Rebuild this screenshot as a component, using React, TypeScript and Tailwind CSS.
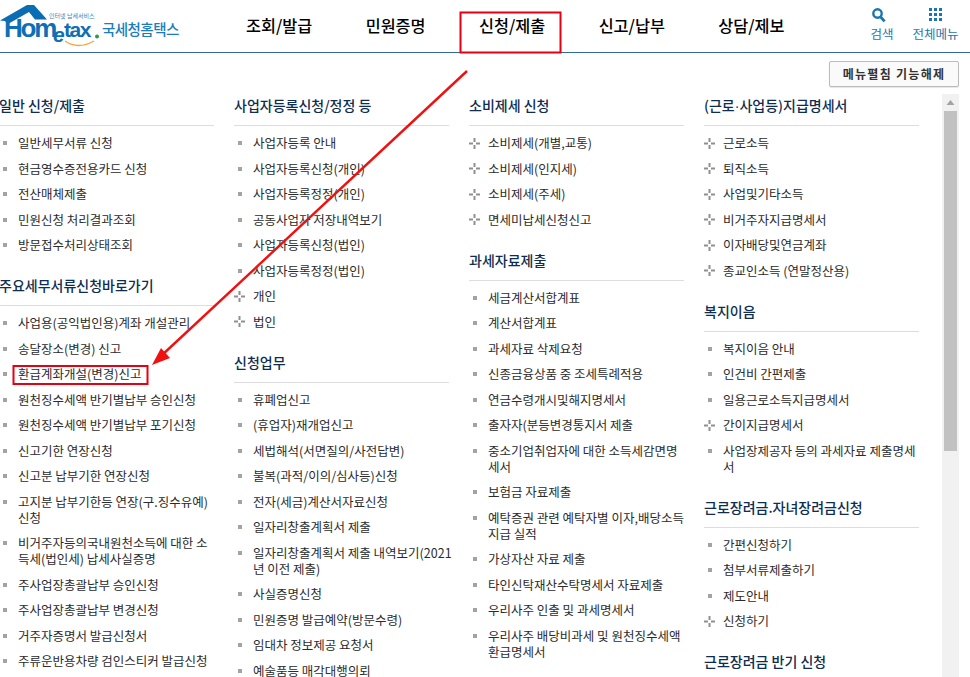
import type { ReactNode } from 'react';

type Item = { t: string; plus?: boolean };
type Section = { title: ReactNode; items: Item[] };

const s = (...list: string[]): Item[] => list.map((t) => ({ t }));
const p = (...list: string[]): Item[] => list.map((t) => ({ t, plus: true }));

const columns: Section[][] = [
  [
    {
      title: '일반 신청/제출',
      items: s('일반세무서류 신청', '현금영수증전용카드 신청', '전산매체제출', '민원신청 처리결과조회', '방문접수처리상태조회'),
    },
    {
      title: '주요세무서류신청바로가기',
      items: s(
        '사업용(공익법인용)계좌 개설관리',
        '송달장소(변경) 신고',
        '환급계좌개설(변경)신고',
        '원천징수세액 반기별납부 승인신청',
        '원천징수세액 반기별납부 포기신청',
        '신고기한 연장신청',
        '신고분 납부기한 연장신청',
        '고지분 납부기한등 연장(구.징수유예)\n신청',
        '비거주자등의국내원천소득에 대한 소\n득세(법인세) 납세사실증명',
        '주사업장총괄납부 승인신청',
        '주사업장총괄납부 변경신청',
        '거주자증명서 발급신청서',
        '주류운반용차량 검인스티커 발급신청',
      ),
    },
  ],
  [
    {
      title: '사업자등록신청/정정 등',
      items: [
        ...s('사업자등록 안내', '사업자등록신청(개인)', '사업자등록정정(개인)', '공동사업자 저장내역보기', '사업자등록신청(법인)', '사업자등록정정(법인)'),
        ...p('개인', '법인'),
      ],
    },
    {
      title: '신청업무',
      items: s(
        '휴폐업신고',
        '(휴업자)재개업신고',
        '세법해석(서면질의/사전답변)',
        '불복(과적/이의/심사등)신청',
        '전자(세금)계산서자료신청',
        '일자리창출계획서 제출',
        '일자리창출계획서 제출 내역보기(2021\n년 이전 제출)',
        '사실증명신청',
        '민원증명 발급예약(방문수령)',
        '임대차 정보제공 요청서',
        '예술품등 매각대행의뢰',
      ),
    },
  ],
  [
    {
      title: '소비제세 신청',
      items: p('소비제세(개별,교통)', '소비제세(인지세)', '소비제세(주세)', '면세미납세신청신고'),
    },
    {
      title: '과세자료제출',
      items: s(
        '세금계산서합계표',
        '계산서합계표',
        '과세자료 삭제요청',
        '신종금융상품 중 조세특례적용',
        '연금수령개시및해지명세서',
        '출자자(분등변경통지서 제출',
        '중소기업취업자에 대한 소득세감면명\n세서',
        '보험금 자료제출',
        '예탁증권 관련 예탁자별 이자,배당소득\n지급 실적',
        '가상자산 자료 제출',
        '타인신탁재산수탁명세서 자료제출',
        '우리사주 인출 및 과세명세서',
        '우리사주 배당비과세 및 원천징수세액\n환급명세서',
      ),
    },
  ],
  [
    {
      title: (
        <>
          (근로<span className="font-['Liberation_Sans',sans-serif]">·</span>사업등)지급명세서
        </>
      ),
      items: p('근로소득', '퇴직소득', '사업및기타소득', '비거주자지급명세서', '이자배당및연금계좌', '종교인소득 (연말정산용)'),
    },
    {
      title: '복지이음',
      items: [
        ...s('복지이음 안내', '인건비 간편제출', '일용근로소득지급명세서'),
        ...p('간이지급명세서'),
        ...s('사업장제공자 등의 과세자료 제출명세\n서'),
      ],
    },
    {
      title: '근로장려금.자녀장려금신청',
      items: [...s('간편신청하기', '첨부서류제출하기', '제도안내'), ...p('신청하기')],
    },
    { title: '근로장려금 반기 신청', items: [] },
  ],
];

const navItems = ['조회/발급', '민원증명', '신청/제출', '신고/납부', '상담/제보'];

function PlusIcon() {
  return (
    <svg width="11" height="11" viewBox="0 0 11 11" className="shrink-0">
      <path d="M5.5 0v4M5.5 7v4M0 5.5h4M7 5.5h4" stroke="#8f8f8f" strokeWidth="2" />
    </svg>
  );
}

function SearchIcon() {
  return (
    <svg width="14" height="15" viewBox="0 0 14 15" className="mr-[7px]">
      <circle cx="5.5" cy="5.5" r="4.2" fill="none" stroke="#1a76b0" strokeWidth="2.4" />
      <path d="M8.6 9 L12.6 13.4" stroke="#1a76b0" strokeWidth="2.8" />
    </svg>
  );
}

function GridIcon() {
  return (
    <svg width="13" height="15" viewBox="0 0 13 15" fill="#1a76b0">
      {[0, 5, 10].map((y) =>
        [0, 5, 10].map((x) => <rect key={`${x}-${y}`} x={x} y={y} width="3" height="3" />),
      )}
    </svg>
  );
}

function Logo() {
  return (
    <svg width="180" height="48" viewBox="0 0 180 48" className="shrink-0">
      <path d="M0 20.5 L27 5 H34 L47 19.5 H35 L29 12 L8 24 L5 21 Z" fill="#0a6db4" />
      <text x="49" y="18" fontSize="6" fill="#3f7fb5" fontFamily="'Noto Sans CJK KR', sans-serif">
        인터넷 납세서비스
      </text>
      <text x="4" y="37" fontSize="26" fontWeight="700" letterSpacing="-2.2" fill="#0f6fb5" fontFamily="'Liberation Sans', sans-serif">
        Hom
      </text>
      <text x="53" y="42" fontSize="21" fontWeight="700" fontStyle="italic" fill="#0f6fb5" fontFamily="'Liberation Sans', sans-serif">
        e
      </text>
      <text x="64" y="37" fontSize="21" fontWeight="700" letterSpacing="-1.4" fill="#0f6fb5" fontFamily="'Liberation Sans', sans-serif">
        tax
      </text>
      <circle cx="97" cy="36.5" r="2" fill="#2f9a45" />
      <path d="M65 41 Q 78 50 94 41" fill="none" stroke="#f3a73b" strokeWidth="1.3" />
      <text x="102" y="35" fontSize="14.5" fontWeight="500" fill="#1a7dbf" letterSpacing="-0.55" fontFamily="'Noto Sans CJK KR', sans-serif">
        국세청홈택스
      </text>
    </svg>
  );
}

function Header() {
  return (
    <header className="flex h-[53px] items-start border-b border-[#2f6a9d]">
      <div className="w-[246px] shrink-0">
        <Logo />
      </div>
      <nav className="flex h-full w-[537px] shrink-0 items-center gap-[53.4px] pb-[2px]">
        {navItems.map((n) => (
          <span key={n} className="shrink-0 whitespace-nowrap text-[16.3px] font-medium leading-5 text-black">
            {n}
          </span>
        ))}
      </nav>
      <div className="flex flex-1 items-start gap-[17px] pl-[86px] pt-[8px] text-[12.5px] leading-4 text-[#1a76b0]">
        <div className="flex w-[26px] shrink-0 flex-col items-center gap-[3px]">
          <SearchIcon />
          <span className="whitespace-nowrap">검색</span>
        </div>
        <div className="flex w-[47px] shrink-0 flex-col items-center gap-[3px]">
          <GridIcon />
          <span className="whitespace-nowrap">전체메뉴</span>
        </div>
      </div>
    </header>
  );
}

function Column({ sections }: { sections: Section[] }) {
  return (
    <div className="flex w-[215px] shrink-0 flex-col gap-[18px]">
      {sections.map((sec, idx) => (
        <section key={idx}>
          <h3 className="h-[30px] border-b border-[#dddddd] text-[14px] font-medium leading-[18px] text-[#0e2d50]">{sec.title}</h3>
          <ul className="pt-[4.5px]">
            {sec.items.map((it) => (
              <li key={it.t} className="flex items-start py-[4.75px] text-[12.5px] leading-4 text-[#2b2b2b]">
                <span className="flex h-4 w-[19px] shrink-0 items-center">
                  {it.plus ? <PlusIcon /> : <span className="ml-[4px] h-1 w-1 bg-[#a3a3a3]" />}
                </span>
                <span className="whitespace-pre">{it.t}</span>
              </li>
            ))}
          </ul>
        </section>
      ))}
    </div>
  );
}

function Scrollbar() {
  return (
    <aside className="mt-[7px] flex h-[583px] w-[17px] shrink-0 flex-col items-center bg-[#f1f1f1]">
      <svg width="9" height="17" viewBox="0 0 9 17" className="shrink-0">
        <path d="M4.5 6 L8.5 11 H0.5 Z" fill="#a3a3a3" />
      </svg>
      <div className="h-[340px] w-[13px] bg-[#c1c1c1]" />
    </aside>
  );
}

export default function App() {
  return (
    <div className="relative h-[677px] w-[970px] overflow-hidden bg-white font-['Noto_Sans_CJK_KR',sans-serif]">
      <Header />
      <div className="flex justify-end pr-[11px] pt-[8px]">
        <button className="h-[26px] w-[130px] rounded-[2px] border border-[#bbbbbb] bg-[#fafafa] text-[12px] font-bold tracking-[1.3px] text-[#333333] shadow-[0_1px_1px_rgba(0,0,0,0.1)]">
          메뉴펼침 기능해제
        </button>
      </div>
      <main className="flex">
        <div className="w-[942px] shrink-0 pt-[9px]">
          <div className="-ml-px flex gap-5">
            {columns.map((c, i) => (
              <Column key={i} sections={c} />
            ))}
          </div>
        </div>
        <Scrollbar />
      </main>
      <svg width="970" height="677" viewBox="0 0 970 677" className="pointer-events-none absolute left-0 top-0">
        <rect x="460.5" y="12.5" width="100" height="40" fill="none" stroke="#e60012" strokeWidth="2" />
        <rect x="13.5" y="366" width="134" height="18" fill="none" stroke="#e60012" strokeWidth="2" />
        <path d="M467 71 L161 356" stroke="#f01010" strokeWidth="2.4" />
        <path d="M152 365 L161 348 L170 358 Z" fill="#f01010" />
      </svg>
    </div>
  );
}
